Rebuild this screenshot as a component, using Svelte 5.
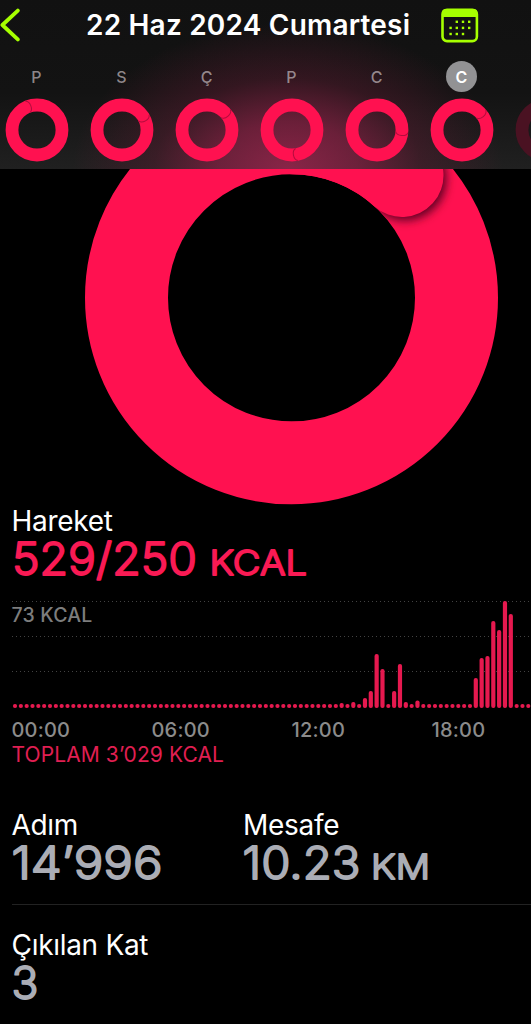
<script>

  let title = "22 Haz 2024 Cumartesi"

  // angle is where the overlapping end of the ring sits, clockwise from the top
  let days = [
    { letter: "P", angle: -22 },
    { letter: "S", angle: 61 },
    { letter: "Ç", angle: 49 },
    { letter: "P", angle: 169 },
    { letter: "C", angle: 95 },
    { letter: "C", angle: 50, selected: true },
    { letter: "", angle: 0, dim: true },
  ]

  // bars that are taller than the resting dot, by quarter hour
  let peaks = {
    56: 5,
    58: 6,
    60: 10,
    61: 17,
    62: 54,
    63: 39,
    65: 17,
    66: 44,
    67: 6,
    69: 7.5,
    79: 30,
    80: 50,
    81: 52,
    82: 87,
    83: 78,
    84: 107,
    85: 94,
  }

  let bars = []

  for (let i = 0; i < 96; i++) {
    bars.push(peaks[i] || 4)
  }

  let hours = ["00:00", "06:00", "12:00", "18:00"]

  let calendar_dots = [
    [1, 0], [2, 0], [3, 0],
    [0, 1], [1, 1], [2, 1], [3, 1],
    [0, 2], [1, 2], [2, 2],
  ]

</script>

<div class="screen">

  <header>

    <div class="nav">
      <button class="back" aria-label="Geri">
        <svg width="24" height="50" viewBox="0 0 24 50">
          <path d="M17.8 10.6 L2.4 25 L17.8 39.4" />
        </svg>
      </button>

      <h1>{title}</h1>

      <button class="calendar" aria-label="Takvim">
        <svg width="38" height="35" viewBox="0 0 38 35">
          <rect class="frame" x="1.5" y="1.7" width="34.4" height="31.4" rx="4.5" />
          <path class="lid" d="M1 9 V5 Q1 1 5 1 H32.4 Q36.4 1 36.4 5 V9 Z" />
          {#each calendar_dots as [col, row]}
            <rect class="dot" x={8.4 + col * 6.2} y={12.6 + row * 6.1} width="2.4" height="2.4" />
          {/each}
        </svg>
      </button>
    </div>

    <div class="week">
      {#each days as day}
        <div class="day" class:dim={day.dim}>
          <span class="letter" class:selected={day.selected}>{day.letter}</span>
          <svg width="64" height="64" viewBox="-32 -32 64 64">
            <circle class="ring" r="25" />
            {#if !day.dim}
              <path class="seam" d="M0 -31 C4.5 -29.5 4.5 -20.5 0 -18.8" transform="rotate({day.angle})" />
            {/if}
          </svg>
        </div>
      {/each}
    </div>

  </header>

  <svg class="big-ring" width="531" height="336" viewBox="0 169 531 336">
    <defs>
      <clipPath id="band">
        <path clip-rule="evenodd" d="M85 297.3 a206.5 206.5 0 1 0 413 0 a206.5 206.5 0 1 0 -413 0 Z M168 297.3 a123.5 123.5 0 1 0 247 0 a123.5 123.5 0 1 0 -247 0 Z" />
      </clipPath>
      <filter id="soft" x="-50%" y="-50%" width="200%" height="200%">
        <feGaussianBlur stdDeviation="5" />
      </filter>
    </defs>
    <circle cx="291.5" cy="297.8" r="165" />
    <g clip-path="url(#band)">
      <circle class="shade" cx="405" cy="179" r="41.5" filter="url(#soft)" />
    </g>
    <path d="M291.5 132.8 A165 165 0 0 1 402 175.5" stroke-linecap="round" />
  </svg>

  <section class="move">
    <h2>Hareket</h2>
    <svg class="value pink" width="320" height="48" viewBox="0 0 320 48">
      <text x="0" y="38" font-size="44.5" textLength="185" lengthAdjust="spacingAndGlyphs">529/250</text>
      <text x="197.5" y="38" font-size="33.5" textLength="97.5" lengthAdjust="spacingAndGlyphs">KCAL</text>
    </svg>

    <div class="chart">
      <div class="line top"><span>73 KCAL</span></div>
      <div class="line second"></div>
      <div class="line third"></div>
      <svg class="bars" width="519" height="107" viewBox="0 0 519 107">
        {#each bars as height, i}
          <rect x={0.9 + i * 5.833} y={107 - height} width="4.2" {height} rx="2" />
        {/each}
      </svg>
    </div>

    <div class="hours">
      {#each hours as hour}
        <span>{hour}</span>
      {/each}
    </div>
    <p class="total">TOPLAM 3’029 KCAL</p>
  </section>

  <section class="stats">
    <div class="stat">
      <h2>Adım</h2>
      <svg class="value" width="200" height="48" viewBox="0 0 200 48">
        <text x="-0.5" y="38" font-size="44.5" textLength="151" lengthAdjust="spacingAndGlyphs">14’996</text>
      </svg>
    </div>
    <div class="stat">
      <h2>Mesafe</h2>
      <svg class="value" width="240" height="48" viewBox="0 0 240 48">
        <text x="-0.5" y="38" font-size="44.5" textLength="118" lengthAdjust="spacingAndGlyphs">10.23</text>
        <text x="128" y="38" font-size="34" textLength="59" lengthAdjust="spacingAndGlyphs">KM</text>
      </svg>
    </div>
  </section>

  <section class="stats last">
    <div class="stat">
      <h2>Çıkılan Kat</h2>
      <svg class="value" width="80" height="48" viewBox="0 0 80 48">
        <text x="-0.5" y="38" font-size="44.5">3</text>
      </svg>
    </div>
  </section>

</div>

<style>

  :global(body) {
    margin: 0;
    background: #000;
  }

  .screen {
    width: 531px;
    height: 1024px;
    overflow: hidden;
    background: #000;
    color: #fff;
    font-family: Inter, "Noto Sans", sans-serif;
  }

  button {
    padding: 0;
    border: none;
    background: none;
    display: block;
  }

  svg {
    display: block;
  }

  header {
    height: 169px;
    overflow: hidden;
    background:
      radial-gradient(ellipse 215px 145px at 288px 168px, rgba(160, 38, 80, 0.82) 0%, rgba(145, 34, 72, 0.68) 32%, rgba(100, 28, 52, 0.4) 62%, rgba(60, 20, 32, 0) 100%),
      linear-gradient(#111 0%, #131313 55%, #202020 100%);
  }

  .nav {
    display: flex;
    height: 61px;
    align-items: flex-start;
  }

  .back {
    width: 86px;
  }

  .back path {
    fill: none;
    stroke: #a6ff00;
    stroke-width: 3.8;
    stroke-linecap: round;
    stroke-linejoin: round;
  }

  h1 {
    width: 355px;
    margin: 0;
    font-size: 28px;
    line-height: 50px;
    font-weight: 600;
    letter-spacing: 0.2px;
    white-space: nowrap;
  }

  .calendar {
    padding-top: 7.5px;
  }

  .frame {
    fill: none;
    stroke: #a6ff00;
    stroke-width: 2.6;
  }

  .lid,
  .dot {
    fill: #a6ff00;
  }

  .week {
    display: flex;
    width: 600px;
    margin-left: -6px;
  }

  .day {
    width: 85px;
    flex-shrink: 0;
    display: flex;
    flex-direction: column;
    align-items: center;
    gap: 6px;
  }

  .letter {
    width: 31px;
    height: 31px;
    border-radius: 50%;
    text-align: center;
    line-height: 32px;
    font-size: 16px;
    font-weight: 500;
    color: rgba(190, 180, 184, 0.72);
  }

  .selected {
    background: #929294;
    color: #fff;
    font-weight: 600;
  }

  .ring {
    fill: none;
    stroke: #ff1150;
    stroke-width: 12.8;
  }

  .seam {
    fill: none;
    stroke: #b30c3d;
    stroke-width: 1;
  }

  .dim .ring {
    stroke: #4a1222;
  }

  .big-ring {
    fill: none;
    stroke: #ff1150;
    stroke-width: 83;
  }

  .big-ring .shade {
    fill: #5c0420;
    stroke: none;
  }

  h2 {
    margin: 0;
    font-size: 28px;
    line-height: 34px;
    font-weight: 400;
    letter-spacing: -0.3px;
  }

  .move {
    margin-top: -1px;
    padding-left: 11.5px;
  }

  /* thin glyphs with a round outline give the soft stroke ends */
  .value {
    margin-top: -1px;
    overflow: visible;
    font-weight: 300;
    fill: #abadb5;
    stroke: #abadb5;
    stroke-width: 1.8;
    stroke-linejoin: round;
  }

  .pink {
    fill: #f91a54;
    stroke: #f91a54;
  }

  .chart {
    display: grid;
    grid-template-rows: 35px 35px 37px;
    height: 107px;
    margin-top: 16px;
  }

  .line {
    grid-column: 1;
    background: repeating-linear-gradient(90deg, #424242 0 1px, transparent 1px 4px) top / 100% 1px no-repeat;
  }

  .top {
    grid-row: 1;
  }

  .second {
    grid-row: 2;
  }

  .third {
    grid-row: 3;
  }

  .line span {
    display: block;
    padding-top: 3px;
    font-size: 19.5px;
    line-height: 22px;
    font-weight: 500;
    letter-spacing: 0.2px;
    color: #7d7d7d;
  }

  .bars {
    grid-column: 1;
    grid-row: 1 / 4;
    fill: #e6194f;
  }

  .hours {
    display: flex;
    margin-top: 10px;
    font-size: 20px;
    line-height: 24px;
    font-weight: 500;
    letter-spacing: 0.2px;
    color: #8b8b8b;
  }

  .hours span {
    width: 140px;
    flex-shrink: 0;
  }

  .total {
    margin: 0;
    font-size: 21px;
    line-height: 26px;
    letter-spacing: 0.1px;
    color: #e01f52;
  }

  .stats {
    display: flex;
    margin-left: 11.5px;
    height: 96px;
    padding-top: 40px;
    border-bottom: 1px solid #222;
  }

  .last {
    padding-top: 23px;
    border: none;
  }

  .stat {
    width: 231.5px;
  }

</style>
